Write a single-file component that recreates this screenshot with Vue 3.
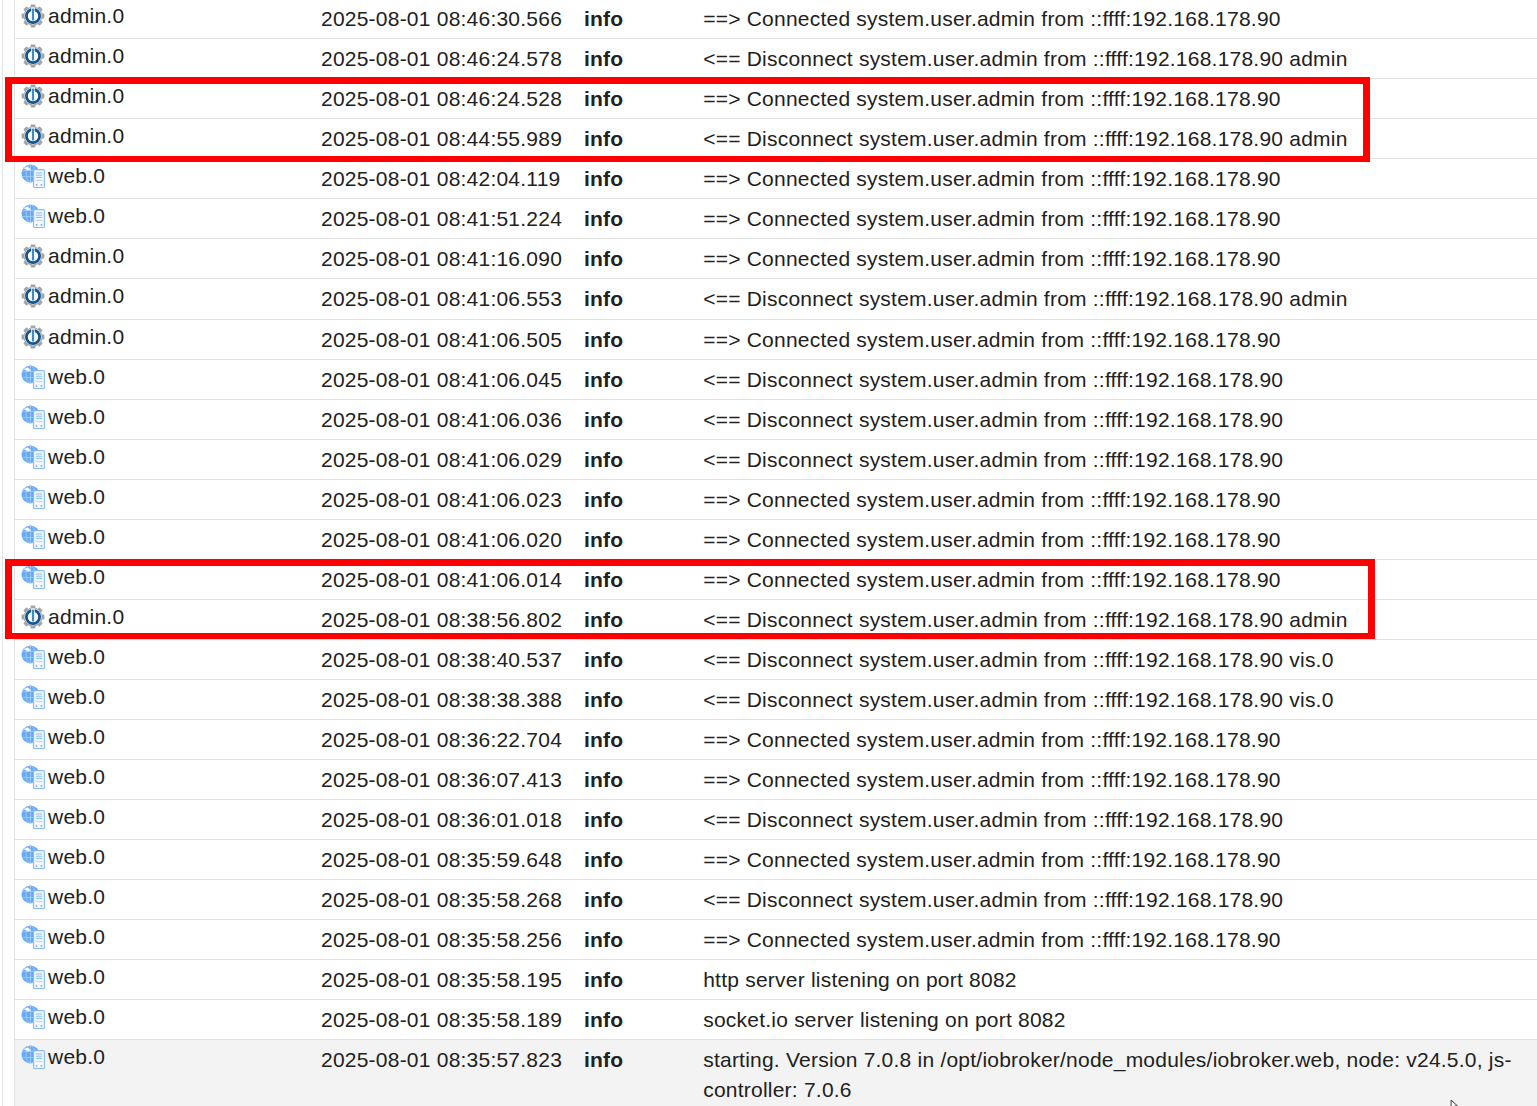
<script setup>
const C = '==> Connected system.user.admin from ::ffff:192.168.178.90'
const D = '<== Disconnect system.user.admin from ::ffff:192.168.178.90'
const rows = [
  ['admin.0', '08:46:30.566', C],
  ['admin.0', '08:46:24.578', D + ' admin'],
  ['admin.0', '08:46:24.528', C],
  ['admin.0', '08:44:55.989', D + ' admin'],
  ['web.0', '08:42:04.119', C],
  ['web.0', '08:41:51.224', C],
  ['admin.0', '08:41:16.090', C],
  ['admin.0', '08:41:06.553', D + ' admin'],
  ['admin.0', '08:41:06.505', C],
  ['web.0', '08:41:06.045', D],
  ['web.0', '08:41:06.036', D],
  ['web.0', '08:41:06.029', D],
  ['web.0', '08:41:06.023', C],
  ['web.0', '08:41:06.020', C],
  ['web.0', '08:41:06.014', C],
  ['admin.0', '08:38:56.802', D + ' admin'],
  ['web.0', '08:38:40.537', D + ' vis.0'],
  ['web.0', '08:38:38.388', D + ' vis.0'],
  ['web.0', '08:36:22.704', C],
  ['web.0', '08:36:07.413', C],
  ['web.0', '08:36:01.018', D],
  ['web.0', '08:35:59.648', C],
  ['web.0', '08:35:58.268', D],
  ['web.0', '08:35:58.256', C],
  ['web.0', '08:35:58.195', 'http server listening on port 8082'],
  ['web.0', '08:35:58.189', 'socket.io server listening on port 8082'],
  ['web.0', '08:35:57.823', 'starting. Version 7.0.8 in /opt/iobroker/node_modules/iobroker.web, node: v24.5.0, js-controller: 7.0.6'],
]
const teeth = [0, 45, 90, 135, 180, 225, 270, 315]
</script>

<template>
  <div class="page">
    <div class="outer">
      <div class="table">
        <div v-for="(r, i) in rows" :key="i" class="row" :class="{ last: i === rows.length - 1 }">
          <div class="source">
            <svg v-if="r[0] === 'admin.0'" class="icon" viewBox="0 0 24 24">
              <g fill="#a2a5a8">
                <rect v-for="t in teeth" :key="t" x="9.6" y="0.6" width="4.8" height="5" rx="0.8" :transform="`rotate(${t} 12 12)`" />
              </g>
              <circle cx="12" cy="12" r="9.4" fill="#a2a5a8" />
              <circle cx="12" cy="12" r="8.5" fill="#fff" />
              <circle cx="12" cy="12" r="6.6" fill="none" stroke="#14558f" stroke-width="2.8" />
              <rect x="10.2" y="3.6" width="3.6" height="7" fill="#fff" />
              <rect x="10.9" y="4.6" width="2.2" height="12" rx="0.6" fill="#3a8ccc" />
            </svg>
            <svg v-else class="icon" viewBox="0 0 24 24">
              <circle cx="9.5" cy="9.5" r="9" fill="#66a9f5" />
              <g fill="none" stroke="#b9d8fa" stroke-width="0.6">
                <ellipse cx="9.5" cy="9.5" rx="4.4" ry="9" />
                <path d="M9.5 .5v18M.5 6.5h18M.5 12.5h18" />
              </g>
              <path d="M2.2 4l4.8-1.6 3 3-3 1z" fill="#f0f7ff" />
              <rect x="12.6" y="5.6" width="10.8" height="18" rx="1.2" fill="#f3f8fe" stroke="#86bbf4" stroke-width="1.1" />
              <path d="M14.8 9h6.4M14.8 11.2h6.4M14.8 13.4h6.4" stroke="#86bbf4" stroke-width="1" />
              <rect x="14.6" y="15.8" width="6.8" height="1.2" fill="#bcd9f8" />
              <circle cx="15.6" cy="20.8" r="0.9" fill="#6fa9ea" />
              <circle cx="20.4" cy="20.8" r="0.9" fill="#6fa9ea" />
            </svg>
            <span>{{ r[0] }}</span>
          </div>
          <div>2025-08-01 {{ r[1] }}</div>
          <div class="level">info</div>
          <div class="message">{{ r[2] }}</div>
        </div>
      </div>
    </div>

    <div class="mark first"></div>
    <div class="mark second"></div>

    <svg class="cursor" viewBox="0 0 10 10">
      <path d="M1 1v7.5l2-1.8 1.2 3 1.3-.6-1.2-2.8h2.5z" fill="#fff" stroke="#222" stroke-width="0.8" />
    </svg>
  </div>
</template>

<style>
html,
body {
  margin: 0;
  background: #fff;
}
</style>

<style scoped>
.page {
  position: relative;
  height: 1106px;
  overflow: hidden;
  background: #fff;
  font-family: "Liberation Sans", Arial, sans-serif;
  font-size: 21px;
  line-height: 30px;
  letter-spacing: 0.225px;
  color: #212121;
}

.outer {
  padding-top: 0.1px;
  margin-top: -0.84px;
  margin-left: 2px;
  padding-left: 11px;
  border-left: 1px solid #e4e4e4;
}

.table {
  border-left: 1px solid #e4e4e4;
}

.row {
  display: grid;
  grid-template-columns: 306px 263px 119px 1fr;
  min-height: 40.04px;
  box-sizing: border-box;
  padding-top: 5px;
  border-bottom: 1px solid #e0e0e0;
}

.row.last {
  padding-bottom: 8px;
  background: #f3f3f3;
}

.source {
  display: flex;
  align-items: flex-start;
  gap: 3px;
  padding-left: 6px;
  margin-top: -3px;
}

.icon {
  flex: none;
  width: 24px;
  height: 24px;
  margin-top: 3px;
}

.level {
  font-weight: 700;
}

.message {
  padding-left: 0.2px;
  padding-right: 22px;
}

.mark {
  position: absolute;
  left: 5px;
  box-sizing: border-box;
  border: 7px solid #ff0000;
}

.mark.first {
  top: 77px;
  width: 1365px;
  height: 85px;
  border-bottom-width: 6px;
}

.mark.second {
  top: 559px;
  width: 1370px;
  height: 80px;
  border-bottom-width: 6px;
}

.cursor {
  position: absolute;
  left: 1450px;
  top: 1099px;
  width: 11px;
  height: 11px;
}
</style>
